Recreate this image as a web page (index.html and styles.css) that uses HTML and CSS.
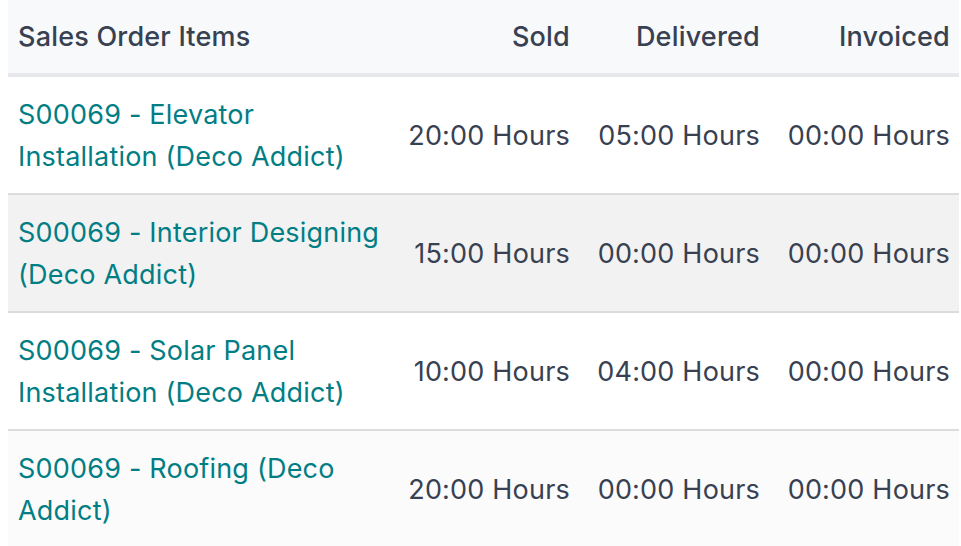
FILE: index.html
```html
<!DOCTYPE html>
<html lang="en">
<head>
<meta charset="utf-8">
<title>Sales Order Items</title>
<link rel="stylesheet" href="styles.css">
</head>
<body>
<table class="so-table">
  <colgroup>
    <col class="c-name">
    <col class="c-num">
    <col class="c-num">
    <col class="c-num">
  </colgroup>
  <thead>
    <tr>
      <th class="name">Sales Order Items</th>
      <th class="num">Sold</th>
      <th class="num">Delivered</th>
      <th class="num">Invoiced</th>
    </tr>
  </thead>
  <tbody>
    <tr class="row-white">
      <td class="name"><a href="#">S00069 - Elevator Installation (Deco Addict)</a></td>
      <td class="num">20:00 Hours</td>
      <td class="num">05:00 Hours</td>
      <td class="num">00:00 Hours</td>
    </tr>
    <tr class="row-grey">
      <td class="name"><a href="#">S00069 - Interior Designing (Deco Addict)</a></td>
      <td class="num">15:00 Hours</td>
      <td class="num">00:00 Hours</td>
      <td class="num">00:00 Hours</td>
    </tr>
    <tr class="row-white">
      <td class="name"><a href="#">S00069 - Solar Panel Installation (Deco Addict)</a></td>
      <td class="num">10:00 Hours</td>
      <td class="num">04:00 Hours</td>
      <td class="num">00:00 Hours</td>
    </tr>
    <tr class="row-light">
      <td class="name"><a href="#">S00069 - Roofing (Deco Addict)</a></td>
      <td class="num">20:00 Hours</td>
      <td class="num">00:00 Hours</td>
      <td class="num">00:00 Hours</td>
    </tr>
  </tbody>
</table>
</body>
</html>
```

FILE: styles.css
```css
html, body {
  margin: 0;
  padding: 0;
  background: #ffffff;
}

body {
  padding: 0 2px 0 8px;
  font-family: Inter, "Noto Sans", sans-serif;
  font-size: 27px;
  letter-spacing: 0.2px;
  color: #374151;
}

.so-table {
  width: 951px;
  border-collapse: collapse;
  table-layout: fixed;
}

.c-name { width: 381px; }
.c-num { width: 190px; }

.so-table th,
.so-table td {
  padding: 0 9px 0 10px;
  vertical-align: middle;
}

.so-table th {
  height: 73px;
  background: #f8f9fb;
  font-weight: 500;
  border-bottom: 4px solid #e6e8eb;
  white-space: nowrap;
}

.so-table td {
  height: 114px;
  padding-top: 2px;
  line-height: 42px;
  border-bottom: 2px solid #dcdcdc;
}

.so-table .name {
  text-align: left;
}

.so-table td.name {
  padding-right: 0;
}

.so-table .num {
  text-align: right;
  white-space: nowrap;
}

.so-table a {
  color: #017e84;
  text-decoration: none;
}

.row-white td { background: #ffffff; }
.row-grey td { background: #f2f2f2; }
.row-light td { background: #fbfbfc; }
```
